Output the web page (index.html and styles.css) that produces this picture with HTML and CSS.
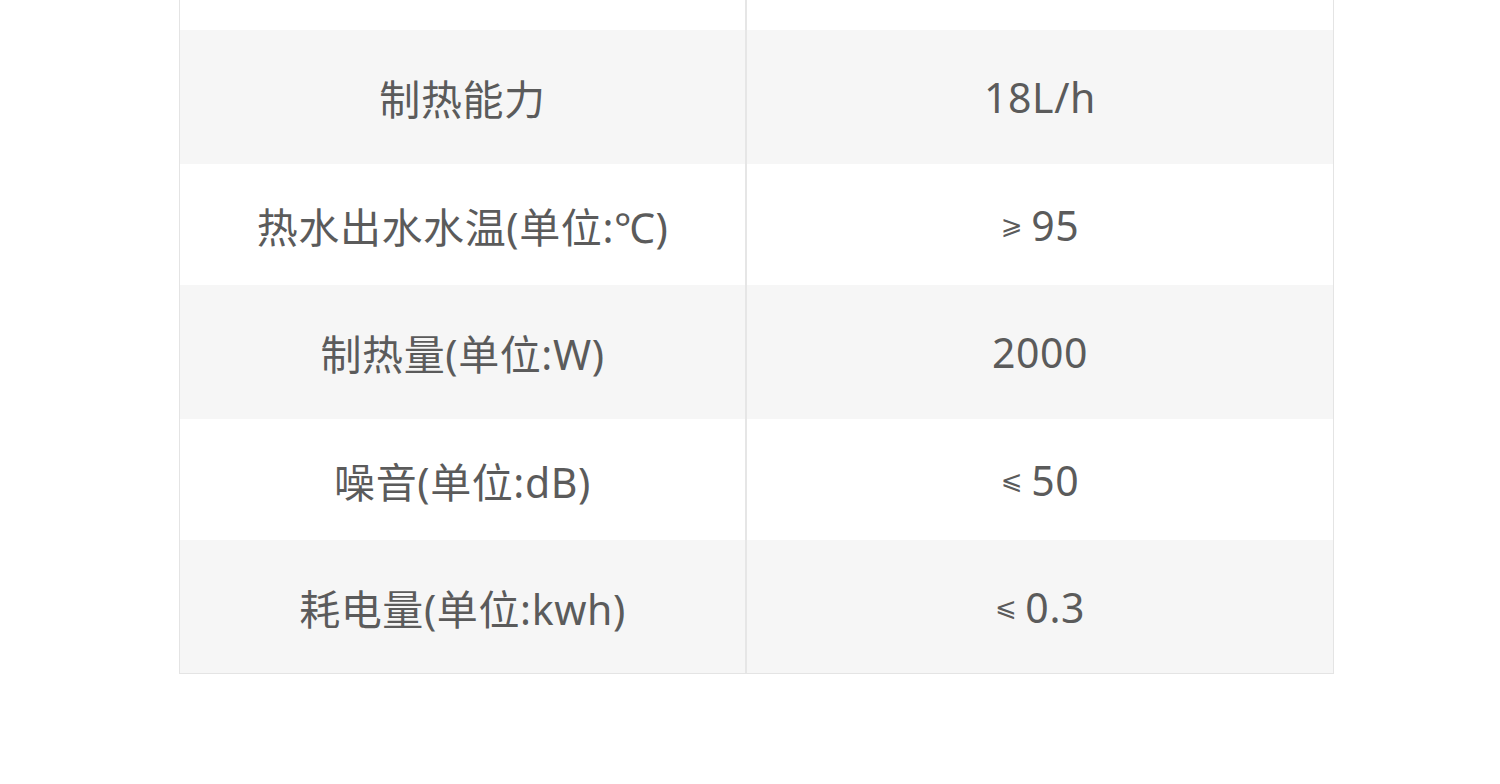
FILE: index.html
```html
<!DOCTYPE html>
<html lang="zh-CN">
<head>
<meta charset="utf-8">
<title>参数表</title>
<link rel="stylesheet" href="styles.css">
</head>
<body>
<div class="page">
  <div class="spec-table">
    <div class="row row-white row-cut"><div class="cell">额定功率</div><div class="cell">2200W</div></div>
    <div class="row row-grey"><div class="cell">制热能力</div><div class="cell">18L/h</div></div>
    <div class="row row-white"><div class="cell">热水出水水温(单位:℃)</div><div class="cell"><span class="sym">⩾</span>95</div></div>
    <div class="row row-grey"><div class="cell">制热量(单位:W)</div><div class="cell">2000</div></div>
    <div class="row row-white"><div class="cell">噪音(单位:dB)</div><div class="cell"><span class="sym">⩽</span>50</div></div>
    <div class="row row-grey row-last"><div class="cell">耗电量(单位:kwh)</div><div class="cell"><span class="sym">⩽</span>0.3</div></div>
  </div>
</div>
</body>
</html>
```
FILE: styles.css
```css
html, body {
  margin: 0;
  padding: 0;
  background: #ffffff;
  overflow: hidden;
}
.page {
  width: 1500px;
  height: 784px;
  overflow: hidden;
}
.spec-table {
  box-sizing: border-box;
  margin-left: 179px;
  margin-top: -91px;
  width: 1155px;
  border-left: 1px solid #e4e4e4;
  border-right: 1px solid #e4e4e4;
  border-bottom: 1px solid #e4e4e4;
  font-family: "Noto Sans", "Noto Sans CJK SC", sans-serif;
  font-size: 41px;
  letter-spacing: 0.6px;
  color: #5b5b5b;
}
.row {
  display: grid;
  grid-template-columns: 567px 1fr;
}
.row-white {
  background: #ffffff;
  height: 121px;
}
.row-grey {
  background: #f6f6f6;
  height: 134px;
}
.row-last {
  height: 133px;
}
.cell {
  display: flex;
  align-items: center;
  justify-content: center;
  white-space: nowrap;
}
.cell:first-child {
  border-right: 2px solid #e6e6e6;
}
.sym {
  font-family: "DejaVu Sans", sans-serif;
  font-size: 26px;
  margin-right: 8px;
}
```
